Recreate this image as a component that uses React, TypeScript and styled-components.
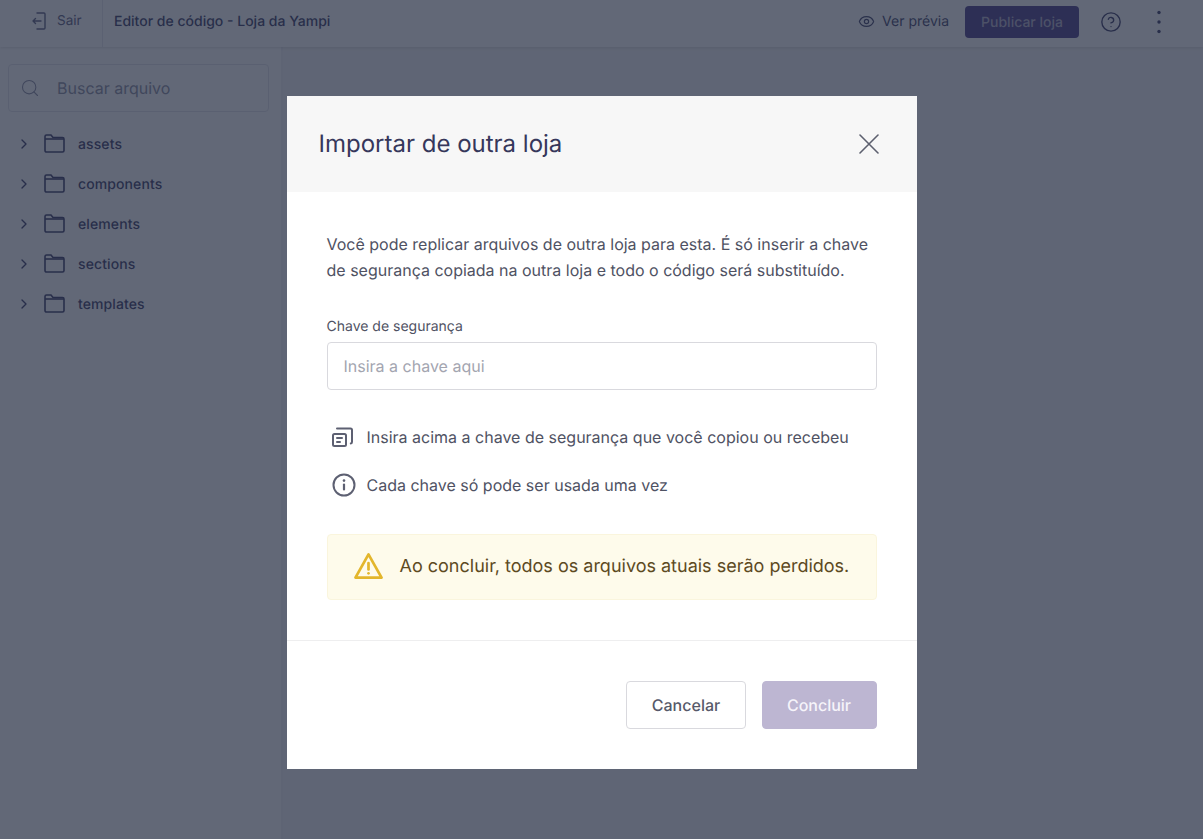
import styled, { createGlobalStyle } from 'styled-components';
import { ChevronRight, Eye, HelpCircle, Search } from 'lucide-react';

const GlobalStyle = createGlobalStyle`
  html, body {
    margin: 0;
    height: 100%;
    background: #fff;
    font-family: Inter, "Liberation Sans", sans-serif;
    text-rendering: geometricPrecision;
    overflow: hidden;
  }
  * { box-sizing: border-box; }
  button, input { text-rendering: geometricPrecision; }
`;

const Page = styled.div`
  height: 839px;
  display: flex;
  flex-direction: column;
`;

const TopBar = styled.header`
  position: relative;
  height: 47px;
  flex: none;
  display: flex;
  align-items: center;
  padding-bottom: 3px;
  background: #fff;
  box-shadow: 0 1px 3px rgba(0, 0, 0, 0.12);
  color: #45476e;
  font-size: 14px;
`;

const ExitLink = styled.a`
  width: 103px;
  height: 47px;
  margin-bottom: -3px;
  padding-bottom: 5px;
  flex: none;
  display: flex;
  align-items: center;
  gap: 11px;
  padding-left: 32px;
  border-right: 1px solid #e8e8ee;
  font-size: 13.5px;
  color: #5f6282;
`;

const PageTitle = styled.span`
  margin: 0 0 2px 11px;
  font-weight: 500;
  font-size: 14px;
  color: #3e3f69;
  flex: 1;
`;

const PreviewLink = styled.a`
  display: flex;
  align-items: center;
  gap: 7px;
  color: #45476e;
  margin: 0 16px 2px 0;
`;

const PublishButton = styled.button`
  width: 114px;
  height: 32px;
  border: none;
  border-radius: 4px;
  background: #4e408c;
  color: #b4b1ca;
  font: 500 14px Inter, sans-serif;
`;

const BarIcon = styled.span<{ $gap: number }>`
  display: flex;
  color: #3e3f69;
  margin-left: ${(p) => p.$gap}px;
`;

const Workspace = styled.div`
  flex: 1;
  display: flex;
  background: #f6f6f7;
`;

const Sidebar = styled.aside`
  width: 283px;
  padding: 17px 13px 0 8px;
  background: #fff;
  border-right: 2px solid #f0f0f4;
`;

const SearchBox = styled.div`
  width: 261px;
  height: 48px;
  display: flex;
  align-items: center;
  gap: 17px;
  padding-left: 11px;
  border: 1px solid #e4e4ea;
  border-radius: 4px;
  color: #8d8fa4;
  font-size: 16px;
  margin-bottom: 12px;
`;

const TreeRow = styled.div`
  height: 40px;
  display: flex;
  align-items: center;
  padding-left: 8px;
  color: #3e3f69;
  font-size: 14px;
  font-weight: 500;
  letter-spacing: 0.1px;
  svg:first-child { margin-right: 12px; }
  svg:nth-child(2) { margin-right: 13px; }
`;

const Overlay = styled.div`
  position: fixed;
  inset: 0;
  background: rgba(32, 40, 61, 0.7);
  display: flex;
  justify-content: center;
  align-items: flex-start;
  padding-top: 96px;
  will-change: opacity;
`;

const Dialog = styled.section`
  width: 630px;
  height: 673px;
  background: #fff;
  display: flex;
  flex-direction: column;
`;

const DialogHead = styled.div`
  height: 96px;
  flex: none;
  background: #f7f7f7;
  display: flex;
  align-items: center;
  justify-content: space-between;
  padding: 0 38px 0 32px;
  color: #36375b;
  font-size: 24px;
  line-height: 32px;
`;

const CloseIcon = styled.svg`
  display: block;
  color: #5d606f;
`;

const DialogBody = styled.div`
  flex: 1;
  padding: 39px 40px 0;
  color: #4f5263;
`;

const Intro = styled.p`
  margin: 0 0 34px;
  font-size: 16px;
  line-height: 26px;
  white-space: nowrap;
`;

const FieldLabel = styled.label`
  display: block;
  font-size: 14px;
  line-height: 20px;
  margin-bottom: 5px;
`;

const KeyInput = styled.input`
  display: block;
  width: 100%;
  height: 48px;
  padding: 0 16px;
  margin-bottom: 24px;
  border: 1px solid #d9d9de;
  border-radius: 4px;
  font: 400 16px Inter, sans-serif;
  color: #4f5263;
  &::placeholder { color: #a3a5b0; opacity: 1; }
`;

const HintRow = styled.div`
  height: 48px;
  display: flex;
  align-items: center;
  gap: 10px;
  padding: 0 0 2px 5px;
  font-size: 16px;
`;

const HintIcon = styled.span`
  width: 25px;
  flex: none;
  display: flex;
  svg { display: block; }
`;

const Warning = styled.div`
  height: 66px;
  margin-top: 24px;
  display: flex;
  align-items: center;
  gap: 17px;
  padding: 0 0 2px 26px;
  background: #fefbeb;
  border: 1px solid #faf5dd;
  border-radius: 4px;
  color: #5d4a1f;
  font-size: 18px;
`;

const DialogFoot = styled.div`
  height: 129px;
  flex: none;
  border-top: 1px solid #eeeeef;
  display: flex;
  justify-content: flex-end;
  gap: 16px;
  padding: 40px 40px 0;
`;

const FootButton = styled.button<{ $primary?: boolean }>`
  height: 48px;
  width: ${(p) => (p.$primary ? 115 : 120)}px;
  padding: 0 0 0 ${(p) => (p.$primary ? 0 : 1)}px;
  border: 1px solid ${(p) => (p.$primary ? '#bdb6d2' : '#d9d9de')};
  border-radius: 4px;
  background: ${(p) => (p.$primary ? '#bdb6d2' : '#fff')};
  color: ${(p) => (p.$primary ? '#f6f4fa' : '#565969')};
  font: 500 16px Inter, sans-serif;
`;

function ExitIcon() {
  return (
    <svg width="14" height="18" viewBox="0 0 14 18" fill="none" stroke="currentColor" strokeWidth="1.400" strokeLinecap="round" strokeLinejoin="round">
      <path d="M5 1h7c.6 0 1 .4 1 1v14c0 .6-.4 1-1 1H5" />
      <path d="M9 9H1M3.500 6.500 1 9l2.500 2.500" />
    </svg>
  );
}

function KebabIcon() {
  return (
    <svg width="6" height="26" viewBox="0 0 6 26" fill="currentColor">
      <circle cx="3" cy="3.500" r="1.700" />
      <circle cx="3" cy="13" r="1.700" />
      <circle cx="3" cy="22.500" r="1.700" />
    </svg>
  );
}

function FolderIcon() {
  return (
    <svg width="21" height="20" viewBox="0 0 21 20" fill="none" stroke="currentColor" strokeWidth="1.6">
      <path d="M1 16.500V2.500C1 1.700 1.600 1 2.500 1H7l2 2.500h9.500c.9 0 1.500.7 1.500 1.500v11.500c0 .9-.6 1.500-1.500 1.500h-16C1.600 18 1 17.400 1 16.500Z" />
      <path d="M1 5h19" />
    </svg>
  );
}

function CopyNoteIcon() {
  return (
    <svg width="21" height="20" viewBox="0 0 21 20" fill="none" stroke="#5d6072" strokeWidth="2" strokeLinecap="round" strokeLinejoin="round">
      <path d="M5 1.500h13.500c.8 0 1.500.7 1.500 1.500v12c0 .8-.4 1.300-1.200 1.400" />
      <rect x="1" y="7" width="13" height="12" rx="1.500" />
      <path d="M5 11h5M5 15h3" />
    </svg>
  );
}

function InfoIcon() {
  return (
    <svg width="24" height="24" viewBox="0 0 24 24" fill="none" stroke="#5d6072" strokeWidth="2" strokeLinecap="round">
      <circle cx="12" cy="12" r="10.500" />
      <path d="M12 11.500v5" strokeWidth="2.200" />
      <path d="M12 7.500v.1" strokeWidth="2.600" />
    </svg>
  );
}

function AlertIcon() {
  return (
    <svg width="29" height="28" viewBox="0 0 30 28" fill="none" stroke="#e3b62c" strokeWidth="2.800" strokeLinecap="round" strokeLinejoin="round">
      <path d="M15 2 28.500 26h-27Z" />
      <path d="M15 11v6.500" />
      <path d="M15 21.500v.1" />
    </svg>
  );
}

const folders = ['assets', 'components', 'elements', 'sections', 'templates'];

export default function App() {
  return (
    <>
      <GlobalStyle />
      <Page>
        <TopBar>
          <ExitLink>
            <ExitIcon />
            Sair
          </ExitLink>
          <PageTitle>Editor de código - Loja da Yampi</PageTitle>
          <PreviewLink>
            <Eye size={17} strokeWidth={1.7} />
            Ver prévia
          </PreviewLink>
          <PublishButton>Publicar loja</PublishButton>
          <BarIcon $gap={21}>
            <HelpCircle size={22} strokeWidth={1.5} />
          </BarIcon>
          <BarIcon $gap={34}>
            <KebabIcon />
          </BarIcon>
          <BarIcon $gap={41} />
        </TopBar>
        <Workspace>
          <Sidebar>
            <SearchBox>
              <Search size={20} strokeWidth={1.3} />
              Buscar arquivo
            </SearchBox>
            {folders.map((name) => (
              <TreeRow key={name}>
                <ChevronRight size={16} strokeWidth={2} />
                <FolderIcon />
                {name}
              </TreeRow>
            ))}
          </Sidebar>
        </Workspace>
      </Page>
      <Overlay>
        <Dialog>
          <DialogHead>
            Importar de outra loja
            <CloseIcon width="20" height="20" viewBox="0 0 20 20" fill="none" stroke="currentColor" strokeWidth="1.600" strokeLinecap="round">
              <path d="M1 1l18 18M19 1 1 19" />
            </CloseIcon>
          </DialogHead>
          <DialogBody>
            <Intro>
              Você pode replicar arquivos de outra loja para esta. É só inserir a chave
              <br />
              de segurança copiada na outra loja e todo o código será substituído.
            </Intro>
            <FieldLabel>Chave de segurança</FieldLabel>
            <KeyInput placeholder="Insira a chave aqui" />
            <HintRow>
              <HintIcon>
                <CopyNoteIcon />
              </HintIcon>
              Insira acima a chave de segurança que você copiou ou recebeu
            </HintRow>
            <HintRow>
              <HintIcon>
                <InfoIcon />
              </HintIcon>
              Cada chave só pode ser usada uma vez
            </HintRow>
            <Warning>
              <AlertIcon />
              Ao concluir, todos os arquivos atuais serão perdidos.
            </Warning>
          </DialogBody>
          <DialogFoot>
            <FootButton>Cancelar</FootButton>
            <FootButton $primary>Concluir</FootButton>
          </DialogFoot>
        </Dialog>
      </Overlay>
    </>
  );
}
